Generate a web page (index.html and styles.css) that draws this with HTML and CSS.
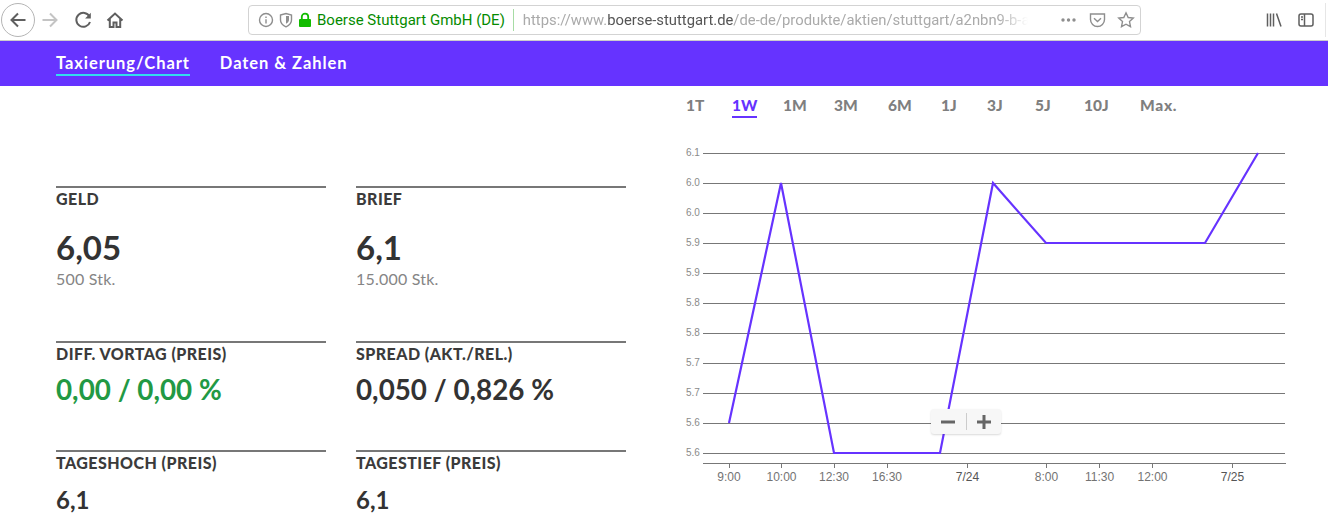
FILE: index.html
```html
<!DOCTYPE html>
<html lang="de">
<head>
<meta charset="utf-8">
<title>Boerse Stuttgart</title>
<link rel="stylesheet" href="styles.css">
</head>
<body>
<header class="toolbar">
  <div class="nav-buttons">
    <span class="back-btn"><svg width="20" height="20" viewBox="0 0 20 20" class="ic"><path d="M17.5 10H3.5M10 3.5L3.5 10L10 16.500"/></svg></span>
    <svg width="20" height="20" viewBox="0 0 20 20" class="ic ic-off"><path d="M2.500 10H16.500M10 3.500L16.500 10L10 16.500"/></svg>
    <svg width="20" height="20" viewBox="0 0 20 20" class="ic ic-reload"><path d="M15.500 6.500A7 7 0 1 0 16 12"/><path class="fill" d="M16.800 2.800V8.500H11.100Z"/></svg>
    <svg width="20" height="20" viewBox="0 0 20 20" class="ic ic-home"><path d="M2.500 10.500L10 3.500L17.500 10.500M4.800 9V17H8.500V12.500H11.500V17H15.200V9"/></svg>
  </div>
  <div class="urlbar">
    <svg width="16" height="16" viewBox="0 0 16 16" class="u-ic"><circle cx="8" cy="8" r="6.500"/><path d="M8 7.200V11.500M8 4.500V6"/></svg>
    <svg width="16" height="16" viewBox="0 0 16 16" class="u-ic u-shield"><path d="M2.500 3L8 1.500L13.500 3V8C13.500 11 11 13.500 8 14.800C5 13.500 2.500 11 2.500 8Z"/><path class="fill" d="M8 4H11V8C11 9.500 9.500 11 8 11.800Z"/></svg>
    <svg width="14" height="16" viewBox="0 0 14 16" class="u-lock"><rect x="1" y="7" width="12" height="8" rx="1"/><path class="shackle" d="M3.800 7.500V4.800A3.200 3.200 0 0 1 10.200 4.800V7.500"/></svg>
    <span class="identity">Boerse Stuttgart GmbH (DE)</span>
    <span class="url-sep"></span>
    <span class="url"><span class="url-dim">https://www.</span><span class="url-host">boerse-stuttgart.de</span><span class="url-dim">/de-de/produkte/aktien/stuttgart/a2nbn9-b-a</span></span>
    <span class="url-actions">
      <svg width="18" height="6" viewBox="0 0 18 6" class="dots"><circle cx="3" cy="3" r="1.700"/><circle cx="8.500" cy="3" r="1.700"/><circle cx="14" cy="3" r="1.700"/></svg>
      <svg width="17" height="16" viewBox="0 0 17 16" class="u-ic u-pocket"><path d="M1.500 2H15.500V7.500A7 7 0 0 1 1.500 7.500Z"/><path d="M5 6.200L8.500 9.500L12 6.200"/></svg>
      <svg width="18" height="18" viewBox="0 0 18 18" class="u-ic u-star"><path d="M9 1.800L11.200 6.500L16.300 7.100L12.500 10.600L13.500 15.700L9 13.200L4.500 15.700L5.500 10.600L1.700 7.100L6.800 6.500Z"/></svg>
    </span>
  </div>
  <div class="right-tools">
    <svg width="16" height="16" viewBox="0 0 16 16" class="t-ic"><path d="M1.500 1.500V14.500M4.500 1.500V14.500M7.500 1.500V14.500M10.500 1.500L15 14.500"/></svg>
    <svg width="16" height="16" viewBox="0 0 16 16" class="t-ic t-side"><rect x="1" y="2" width="14" height="12" rx="2"/><path d="M6.500 2V14M3 5H5M3 7.500H5"/></svg>
    <span class="tool-sep"></span>
  </div>
</header>

<nav class="subnav">
  <a class="subnav-link is-active">Taxierung/Chart</a>
  <a class="subnav-link">Daten &amp; Zahlen</a>
</nav>

<main class="content">
  <section class="facts">
    <div class="fact fact-a">
      <h3 class="fact-label">GELD</h3>
      <div class="fact-value big">6,05</div>
      <div class="fact-sub">500 Stk.</div>
    </div>
    <div class="fact fact-a">
      <h3 class="fact-label">BRIEF</h3>
      <div class="fact-value big">6,1</div>
      <div class="fact-sub">15.000 Stk.</div>
    </div>
    <div class="fact fact-b">
      <h3 class="fact-label">DIFF. VORTAG (PREIS)</h3>
      <div class="fact-value green">0,00 / 0,00 %</div>
    </div>
    <div class="fact fact-b">
      <h3 class="fact-label">SPREAD (AKT./REL.)</h3>
      <div class="fact-value">0,050 / 0,826 %</div>
    </div>
    <div class="fact">
      <h3 class="fact-label">TAGESHOCH (PREIS)</h3>
      <div class="fact-value small">6,1</div>
    </div>
    <div class="fact">
      <h3 class="fact-label">TAGESTIEF (PREIS)</h3>
      <div class="fact-value small">6,1</div>
    </div>
  </section>

  <section class="chart-panel">
    <div class="ranges">
      <span class="range">1T</span>
      <span class="range is-active">1W</span>
      <span class="range">1M</span>
      <span class="range">3M</span>
      <span class="range">6M</span>
      <span class="range">1J</span>
      <span class="range">3J</span>
      <span class="range">5J</span>
      <span class="range">10J</span>
      <span class="range">Max.</span>
    </div>
    <div class="chart">
      <svg width="632" height="350" viewBox="670 140 632 350" class="chart-svg">
        <g class="grid">
          <path d="M703 153.500H1285M703 183.500H1285M703 213.500H1285M703 243.500H1285M703 273.500H1285M703 303.500H1285M703 333.500H1285M703 363.500H1285M703 393.500H1285M703 423.500H1285M703 453.500H1285"/>
          <path d="M703 463.500H1286M729.500 463V468M781.500 463V468M834.500 463V468M887.500 463V468M967.500 463V468M1046.500 463V468M1099.500 463V468M1152.500 463V468M1232.500 463V468"/>
        </g>
        <g class="y-labels">
          <text x="686" y="156">6.1</text><text x="686" y="186">6.0</text><text x="686" y="216">6.0</text><text x="686" y="246">5.9</text><text x="686" y="276">5.9</text><text x="686" y="306">5.8</text><text x="686" y="336">5.8</text><text x="686" y="366">5.7</text><text x="686" y="396">5.7</text><text x="686" y="426">5.6</text><text x="686" y="456">5.6</text>
        </g>
        <g class="x-labels">
          <text x="729" y="481">9:00</text><text x="781.500" y="481">10:00</text><text x="834" y="481">12:30</text><text x="887" y="481">16:30</text><text x="967.500" y="481" class="strong">7/24</text><text x="1046.500" y="481">8:00</text><text x="1099.500" y="481">11:30</text><text x="1152.500" y="481">12:00</text><text x="1232.500" y="481" class="strong">7/25</text>
        </g>
        <polyline class="series" points="729,423 781,183 834,453 887,453 940,453 993,183 1046,243 1099,243 1152,243 1205,243 1258,153"/>
      </svg>
      <div class="zoom-ctl">
        <span class="zoom-btn"><svg width="14" height="14" viewBox="0 0 14 14"><path d="M0 7H14"/></svg></span>
        <span class="zoom-btn zoom-plus"><svg width="14" height="14" viewBox="0 0 14 14"><path d="M0 7H14M7 0V14"/></svg></span>
      </div>
    </div>
  </section>
</main>
</body>
</html>
```
FILE: styles.css
```css
* { box-sizing: border-box; }
html, body { margin: 0; padding: 0; height: 520px; overflow: hidden; background: #fff; }
body { font-family: "Lato", "Liberation Sans", sans-serif; color: #333; }

/* browser chrome */
.toolbar { height: 41px; display: flex; align-items: center; background: #fff; border-bottom: 1px solid #ccc; position: relative; }
.nav-buttons { display: flex; align-items: center; width: 248px; padding-left: 1px; }
.back-btn { width: 34px; height: 34px; border: 1px solid #b5b5b5; border-radius: 50%; display: flex; align-items: center; justify-content: center; }
.ic { fill: none; stroke: #5f5f5f; stroke-width: 2; flex: none; }
.ic .fill { fill: #5f5f5f; stroke: none; }
.ic-off { stroke: #c4c4c4; margin-left: 5px; }
.ic-reload { margin-left: 14px; }
.ic-home { margin-left: 11px; }
.urlbar { width: 893px; height: 30px; border: 1px solid #d3d3d3; border-radius: 4px; display: flex; align-items: center; padding-left: 9px; padding-right: 5px; font-family: "Roboto", sans-serif; font-size: 15px; }
.u-ic { fill: none; stroke: #8e8e8e; stroke-width: 1.400; flex: none; }
.u-ic .fill { fill: #8e8e8e; stroke: none; }
.u-shield { margin-left: 4px; }
.u-lock { margin-left: 4px; flex: none; }
.u-lock rect { fill: #12bc00; }
.u-lock .shackle { fill: none; stroke: #12bc00; stroke-width: 1.800; }
.identity { color: #058b00; margin-left: 5px; white-space: nowrap; }
.url-sep { width: 1px; height: 22px; background: #a7dca5; margin: 0 9px 0 8px; flex: none; }
.url { width: 505px; overflow: hidden; white-space: nowrap; color: #aaa; font-size: 14.800px; -webkit-mask-image: linear-gradient(to right, #000 94%, transparent); mask-image: linear-gradient(to right, #000 94%, transparent); }
.url-host { color: #555; }
.url-actions { display: flex; align-items: center; margin-left: auto; gap: 11px; }
.dots { fill: #8e8e8e; flex: none; }
.right-tools { display: flex; align-items: center; gap: 16px; margin-left: auto; margin-right: 2px; }
.t-ic { fill: none; stroke: #5f5f5f; stroke-width: 1.500; }
.tool-sep { width: 1px; height: 34px; background: #e6e6e6; margin-left: -5px; }

/* purple sub navigation */
.subnav { height: 45px; background: #6633ff; display: flex; padding-left: 56px; gap: 30px; }
.subnav-link { color: #fff; font-size: 16.500px; font-weight: 700; letter-spacing: 0.930px; height: 35px; padding-top: 12px; line-height: 20px; border-bottom: 2px solid transparent; }
.subnav-link.is-active { border-bottom-color: #33ddee; }

/* layout */
.content { display: flex; height: 434px; overflow: hidden; }
.facts { width: 670px; flex: none; padding: 100px 0 0 56px; display: grid; grid-template-columns: 270px 270px; column-gap: 30px; grid-template-rows: 155px 109px auto; align-content: start; }
.fact { border-top: 2px solid #777; }
.fact-label { margin: 0; font-size: 16px; font-weight: 900; line-height: 20px; padding-top: 1px; color: #3b3b3b; letter-spacing: 0.450px; }
.fact-value { font-size: 27.800px; font-weight: 700; line-height: 34px; margin-top: 9px; color: #333; }
.fact-value.big { font-size: 33px; line-height: 40px; margin-top: 18px; }
.fact-value.small { font-size: 24px; margin-top: 10px; }
.fact-value.green { color: #229944; }
.fact-sub { font-size: 16px; line-height: 20px; color: #858585; margin-top: 2px; letter-spacing: 0.200px; }

/* chart */
.chart-panel { flex: 1; display: flex; flex-direction: column; }
.ranges { display: grid; grid-template-columns: 46px 51px 51px 54px 53px 46px 48px 49px 56px auto; justify-items: start; height: 54px; padding-left: 16px; padding-top: 9px; font-size: 15.500px; font-weight: 900; color: #7f7f7f; align-items: start; }
.range { height: 23px; line-height: 20px; }
.range:last-child { letter-spacing: 0.700px; }
.range.is-active { color: #6633ff; border-bottom: 2px solid #6633ff; }
.chart { position: relative; height: 350px; }
.chart-svg { display: block; }
.grid path { stroke: #777; stroke-width: 1; fill: none; }
.y-labels text { font: 10px "Liberation Sans", sans-serif; fill: #8a8a8a; }
.x-labels text { font: 12px "Liberation Sans", sans-serif; fill: #737373; text-anchor: middle; }
.x-labels .strong { fill: #555; }
.series { fill: none; stroke: #6633ff; stroke-width: 2.200; stroke-linejoin: miter; }
.zoom-ctl { position: absolute; left: 261px; top: 269px; width: 70px; height: 25px; display: flex; align-items: center; background: #f7f7f7; border-radius: 3px; box-shadow: 0 1px 2px rgba(0,0,0,.15); }
.zoom-btn { width: 36px; height: 17px; display: flex; align-items: center; justify-content: center; }
.zoom-btn:first-child { border-right: 1px solid #ccc; width: 37px; }
.zoom-btn svg { fill: none; stroke: #666; stroke-width: 3; }
```
